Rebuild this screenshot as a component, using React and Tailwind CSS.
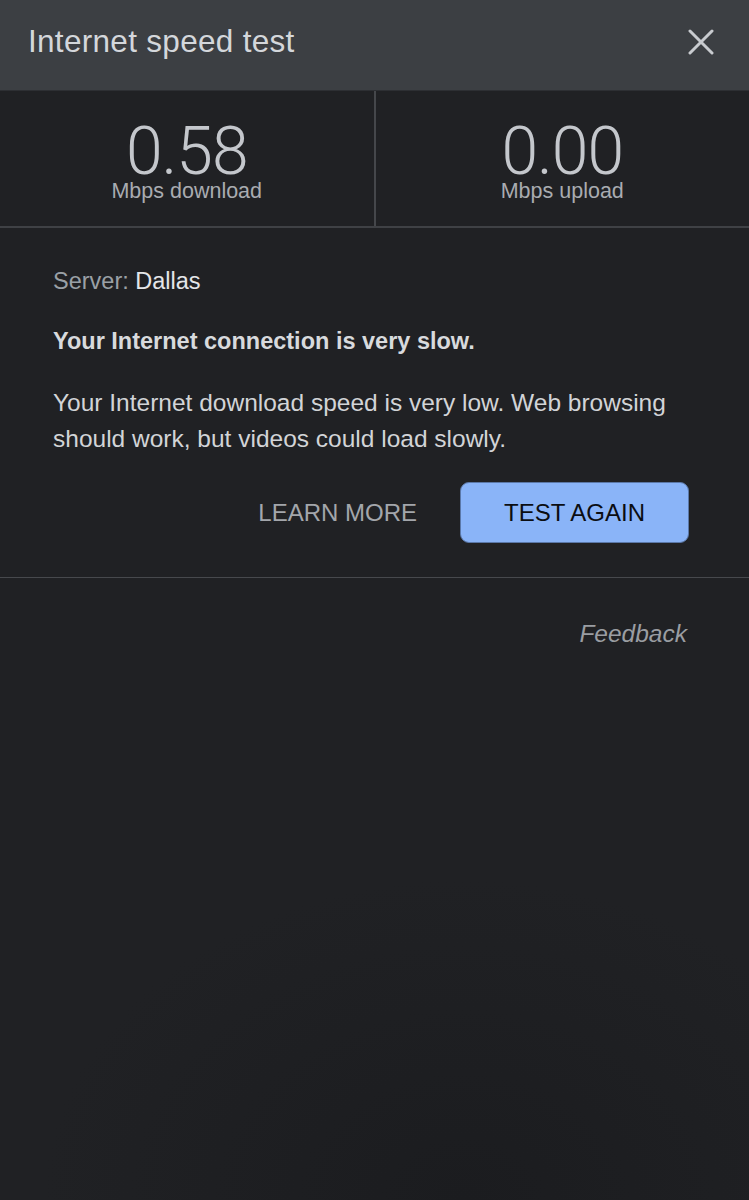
const font = { fontFamily: '"Liberation Sans", Arial, sans-serif' }

function Stat({ value, label }) {
  return (
    <div className="flex-1 flex flex-col items-center pt-[35px]">
      <span className="text-[66px] leading-[52px] font-light text-[#c4c7cc] tracking-[-1px] font-['Roboto',sans-serif]">
        {value}
      </span>
      <span className="text-[21.5px] leading-[24px] text-[#a9acb1] mt-[1px]">{label}</span>
    </div>
  )
}

export default function App() {
  return (
    <div
      style={font}
      className="w-[749px] h-[1200px] flex flex-col bg-[#202124] bg-[radial-gradient(ellipse_420px_320px_at_62%_100%,#1b1c1f,#202124)]"
    >
      {/* header */}
      <header className="h-[91px] shrink-0 bg-[#3c3f43] flex items-center justify-between pl-[28px] pr-[35px] pb-[6px] border-b border-[#2d2f33]">
        <h1 className="text-[31.5px] font-normal text-[#d4d7db] tracking-[0.3px]">Internet speed test</h1>
        <svg width="26" height="26" viewBox="0 0 26 26" className="text-[#c8cbcf]">
          <path d="M2 2 L24 24 M24 2 L2 24" stroke="currentColor" strokeWidth="3" strokeLinecap="round" />
        </svg>
      </header>

      {/* results */}
      <div className="h-[137px] shrink-0 flex border-b-2 border-[#3f4145]">
        <Stat value="0.58" label="Mbps download" />
        <div className="w-[2px] bg-[#45474b]" />
        <Stat value="0.00" label="Mbps upload" />
      </div>

      {/* message */}
      <section className="px-[53px] pt-[39px] pb-[34px] border-b border-[#47494d]">
        <p className="text-[23.5px] leading-[28px]">
          <span className="text-[#9aa0a6]">Server: </span>
          <span className="text-[#e4e6e9]">Dallas</span>
        </p>
        <p className="mt-[32px] text-[23.5px] leading-[28px] font-bold text-[#d8dadd]">
          Your Internet connection is very slow.
        </p>
        <p className="mt-[30px] text-[24.5px] leading-[36px] text-[#d2d4d7] pr-[10px]">
          Your Internet download speed is very low. Web browsing should work, but videos could load slowly.
        </p>
        <div className="mt-[25px] flex items-center justify-end gap-[43px] pr-[7px]">
          <button className="text-[24px] text-[#a3a6ab]">LEARN MORE</button>
          <button className="w-[229px] h-[61px] rounded-[9px] bg-[#8ab4f8] border border-[#5b78a8] text-[24px] text-[#0b0d12]">
            TEST AGAIN
          </button>
        </div>
      </section>

      {/* footer */}
      <div className="flex justify-end pr-[62px] pt-[38px]">
        <span className="text-[24.5px] italic text-[#9a9da2]">Feedback</span>
      </div>
    </div>
  )
}
